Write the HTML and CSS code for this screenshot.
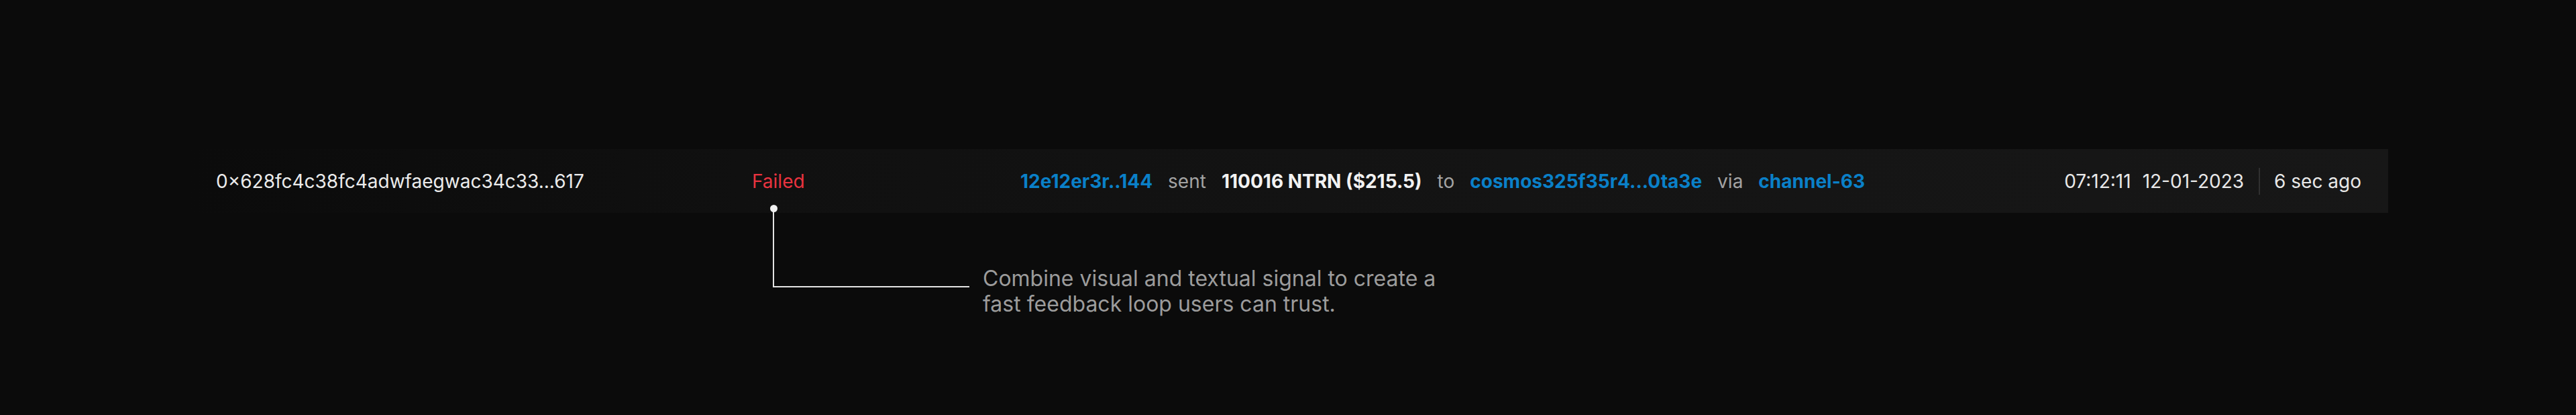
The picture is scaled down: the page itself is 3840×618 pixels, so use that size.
FILE: index.html
```html
<!DOCTYPE html>
<html lang="en">
<head>
<meta charset="utf-8">
<title>Transfer row</title>
<link rel="stylesheet" href="styles.css">
</head>
<body>
<main class="page">
  <div class="row">
    <div class="cell-hash">0×628fc4c38fc4adwfaegwac34c33...617</div>
    <div class="cell-status"><span class="status-failed">Failed</span></div>
    <div class="cell-transfer">
      <span class="link">12e12er3r..144</span>
      <span class="muted">sent</span>
      <span class="amount">110016 NTRN ($215.5)</span>
      <span class="muted">to</span>
      <span class="link">cosmos325f35r4...0ta3e</span>
      <span class="muted">via</span>
      <span class="link">channel-63</span>
    </div>
    <div class="cell-time">
      <span class="time">07:12:11</span>
      <span class="date">12-01-2023</span>
      <span class="divider"></span>
      <span class="ago">6 sec ago</span>
    </div>
    <div class="callout">
      <div class="elbow"></div>
      <p class="callout-text">Combine visual and textual signal to create a fast feedback loop users can trust.</p>
    </div>
  </div>
</main>
</body>
</html>
```
FILE: styles.css
```css
html, body {
  margin: 0;
  padding: 0;
}
body {
  background: #0b0b0b;
  width: 3840px;
  height: 618px;
  overflow: hidden;
  font-family: Inter, "Liberation Sans", sans-serif;
  color: #ebebeb;
}
.page {
  padding: 222px 280px 0 282px;
}
.row {
  position: relative;
  display: flex;
  align-items: center;
  height: 95px;
  padding: 0 40px;
  background: linear-gradient(90deg, #0b0b0b 0%, #101010 25%, #141414 60%, #171717 100%);
  font-size: 28px;
  line-height: 34px;
  white-space: nowrap;
}
.cell-hash {
  width: 799px;
  flex: none;
  color: #ebebeb;
}
.cell-status {
  width: 400px;
  flex: none;
}
.status-failed {
  color: #e8333f;
}
.cell-transfer {
  display: flex;
  align-items: center;
  gap: 23px;
  flex: 1;
}
.link {
  color: #0a80c8;
  font-weight: 700;
}
.muted {
  color: #a3a3a3;
}
.amount {
  color: #f2f2f2;
  font-weight: 700;
}
.cell-time {
  display: flex;
  align-items: center;
  color: #e8e8e8;
}
.time {
  margin-right: 17px;
}
.divider {
  width: 2px;
  height: 40px;
  background: #303030;
  margin: 0 21px 0 22px;
}
.callout {
  position: absolute;
  left: 870px;
  top: 88px;
  display: flex;
  align-items: flex-start;
}
.elbow {
  position: relative;
  width: 291px;
  height: 116px;
  border-left: 2px solid #e4e4e4;
  border-bottom: 2px solid #e4e4e4;
}
.elbow::before {
  content: "";
  position: absolute;
  left: -6.5px;
  top: -5.5px;
  width: 11px;
  height: 11px;
  border-radius: 50%;
  background: #f0f0f0;
}
.callout-text {
  margin: 86px 0 0 20px;
  width: 700px;
  font-size: 32px;
  line-height: 37.5px;
  color: #9c9c9c;
  white-space: normal;
}
```
